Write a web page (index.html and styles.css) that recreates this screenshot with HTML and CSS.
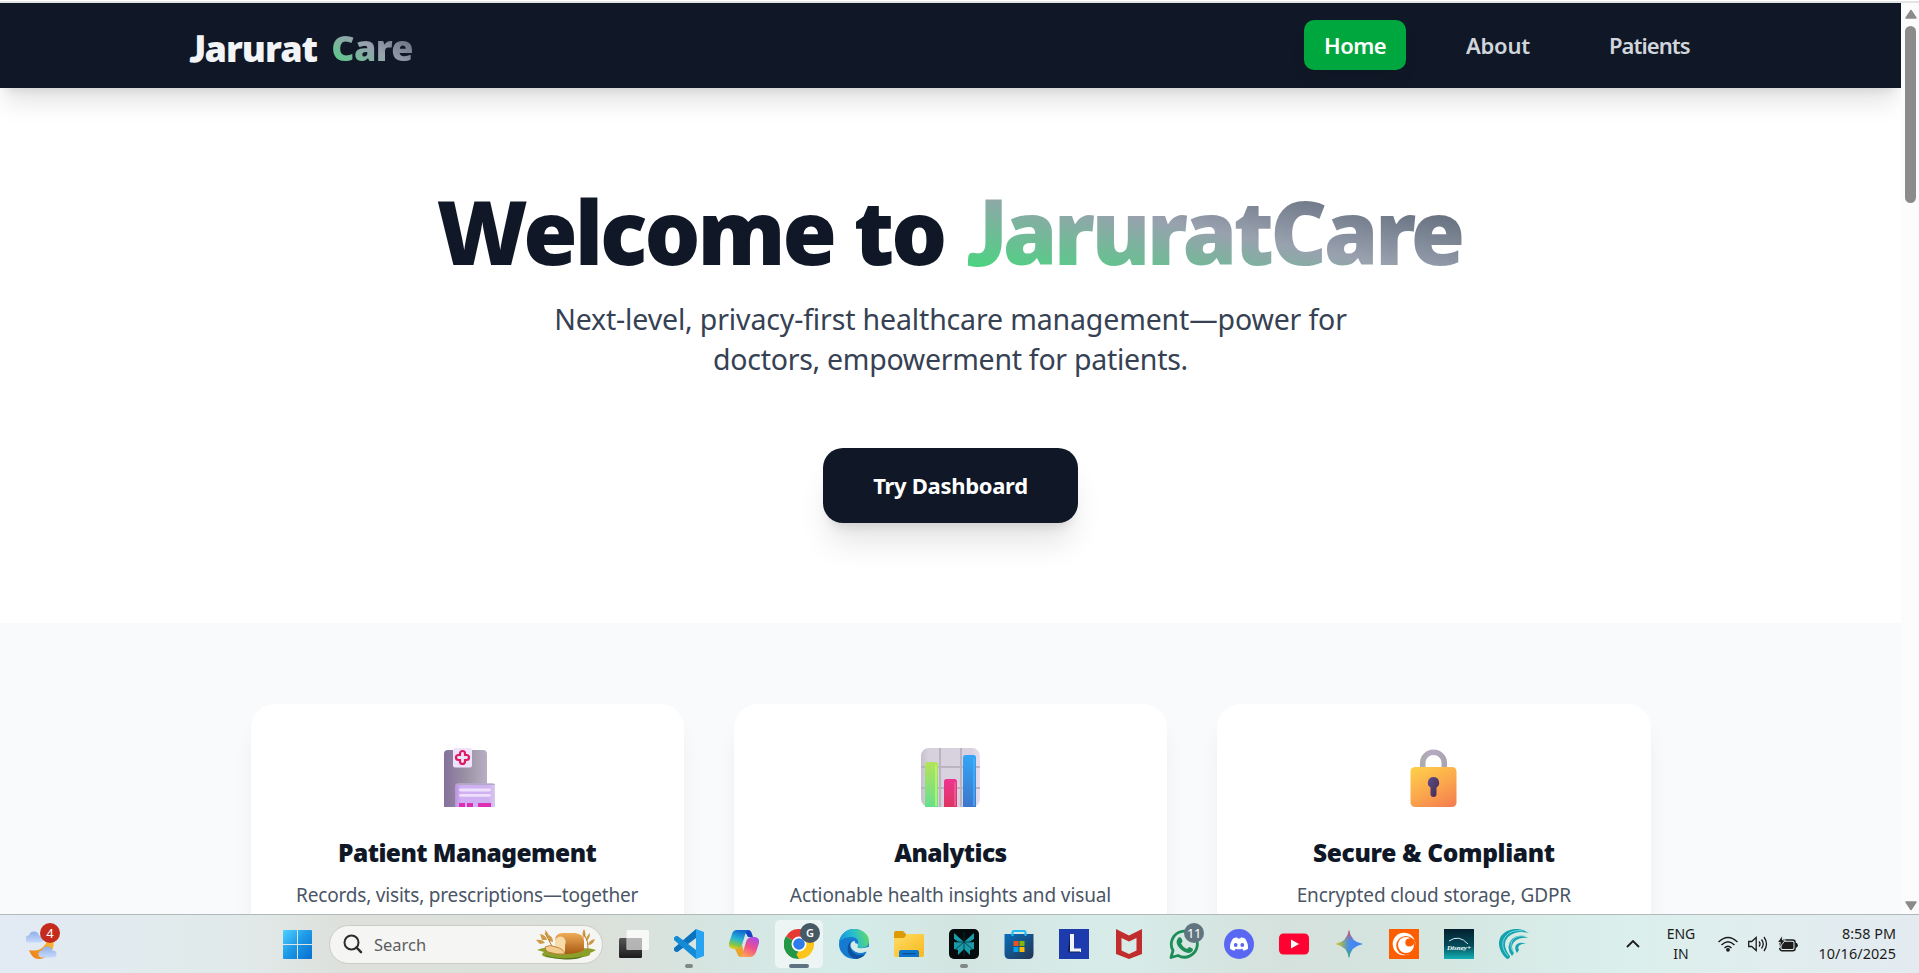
FILE: index.html
```html
<!DOCTYPE html>
<html lang="en">
<head>
<meta charset="utf-8">
<title>Jarurat Care</title>
<link rel="stylesheet" href="styles.css">
</head>
<body>
<div class="screen">
  <div class="window-edge"></div>
  <div class="viewport">
    <div class="page">
      <header class="navbar">
        <div class="logo"><span class="logo-a"><span class="jay">J</span>arurat</span><span class="logo-b grad">Care</span></div>
        <nav class="links">
          <a class="link active">Home</a>
          <a class="link about">About</a>
          <a class="link patients">Patients</a>
        </nav>
      </header>
      <section class="hero">
        <h1 class="title"><span class="title-a">Welcome to</span><span class="title-b grad"><span class="jay">J</span>aruratCare</span></h1>
        <p class="subtitle">Next-level, privacy-first healthcare management—power for<br><span class="sub-two">doctors, empowerment for patients.</span></p>
        <a class="cta">Try Dashboard</a>
      </section>
      <section class="features">
        <article class="card">
          <svg class="emoji" viewBox="-3 0 59 59">
            <defs>
              <linearGradient id="hb" x1="0" y1="0" x2="1" y2="0"><stop offset="0" stop-color="#85709b"/><stop offset=".5" stop-color="#9a91a5"/><stop offset="1" stop-color="#b8b0c2"/></linearGradient>
              <linearGradient id="hf" x1="0" y1="0" x2="1" y2="0"><stop offset="0" stop-color="#b893de"/><stop offset=".15" stop-color="#d0aff4"/><stop offset=".85" stop-color="#ceb2f0"/><stop offset="1" stop-color="#d9c9ec"/></linearGradient>
            </defs>
            <path d="M3 59V6a4 4 0 0 1 4-4h35a4 4 0 0 1 4 4v53z" fill="url(#hb)"/>
            <path d="M14 59V38a2.500 2.500 0 0 1 2.500-2.500h35a2.500 2.500 0 0 1 2.500 2.500v21z" fill="url(#hf)"/>
            <path d="M15 37q0-1.500 2-1.500h35q2 0 2 1.500z" fill="#b4a6c6"/>
            <rect x="12" y="0" width="19" height="19.500" rx="2" fill="#efe3fb"/>
            <path d="M19 7V5.500a2.500 2.500 0 0 1 5 0V7h1.500a2.500 2.500 0 0 1 0 5H24v1.500a2.500 2.500 0 0 1-5 0V12h-1.500a2.500 2.500 0 0 1 0-5z" fill="none" stroke="#df1a5f" stroke-width="2.200"/>
            <path d="M19.500 42h29M19.500 47.300h29" stroke="#eee0fc" stroke-width="2.800" stroke-linecap="round"/>
            <path d="M18 55h6v4h-6zM26 55h6v4h-6zM37 55h13v4H37z" fill="#dc2fb1"/>
          </svg>
          <h2 class="card-title">Patient Management</h2>
          <p class="card-text records">Records, visits, prescriptions—together</p>
        </article>
        <article class="card">
          <svg class="emoji" viewBox="0 0 59 59">
            <defs>
              <linearGradient id="g1" x1="0" y1="0" x2="0" y2="1"><stop offset="0" stop-color="#b3e35b"/><stop offset="1" stop-color="#67df8d"/></linearGradient>
              <linearGradient id="g2" x1="0" y1="0" x2="0" y2="1"><stop offset="0" stop-color="#ee3590"/><stop offset="1" stop-color="#dc3560"/></linearGradient>
              <linearGradient id="g3" x1="0" y1="0" x2="0" y2="1"><stop offset="0" stop-color="#33a6f8"/><stop offset="1" stop-color="#3c76cc"/></linearGradient>
              <linearGradient id="gb" x1="0" y1="0" x2="1" y2="0"><stop offset="0" stop-color="#c6bfcd"/><stop offset=".12" stop-color="#d7d1dd"/><stop offset=".85" stop-color="#d9d1e0"/><stop offset="1" stop-color="#e7dfec"/></linearGradient>
            </defs>
            <rect width="59" height="59" rx="8" fill="url(#gb)"/>
            <path d="M19 0v59M40 0v59M0 19h59M0 40h59" stroke="#b9b4bf" stroke-width="2"/>
            <path d="M4 59V16.500a2.500 2.500 0 0 1 2.500-2.500h8a2.500 2.500 0 0 1 2.500 2.500V59z" fill="url(#g1)"/>
            <path d="M23 59V33.500a2.500 2.500 0 0 1 2.500-2.500h8a2.500 2.500 0 0 1 2.500 2.500V59z" fill="url(#g2)"/>
            <path d="M42 59V9.500A2.500 2.500 0 0 1 44.500 7h8A2.500 2.500 0 0 1 55 9.500V59z" fill="url(#g3)"/>
            <path d="M15 17v41" stroke="#bff66f" stroke-width="2" opacity=".8"/><path d="M34 34v24" stroke="#ee5593" stroke-width="2"/><path d="M53 10v48" stroke="#4fb0f6" stroke-width="2" opacity=".7"/>
          </svg>
          <h2 class="card-title">Analytics</h2>
          <p class="card-text">Actionable health insights and visual</p>
        </article>
        <article class="card">
          <svg class="emoji" viewBox="0 0 59 59">
            <defs>
              <linearGradient id="lb" x1=".2" y1="0" x2=".8" y2="1"><stop offset="0" stop-color="#ffcb4b"/><stop offset=".5" stop-color="#fba94c"/><stop offset="1" stop-color="#f5804f"/></linearGradient>
              <linearGradient id="ls" x1="0" y1="0" x2="1" y2="0"><stop offset="0" stop-color="#adabb1"/><stop offset=".5" stop-color="#b7a9c4"/><stop offset="1" stop-color="#aaa5b0"/></linearGradient>
              <linearGradient id="lk" x1="0" y1="0" x2="1" y2="1"><stop offset="0" stop-color="#5b4e8a"/><stop offset="1" stop-color="#46294b"/></linearGradient>
            </defs>
            <path d="M18.700 22v-7a10.800 10.800 0 0 1 21.600 0v7" fill="none" stroke="url(#ls)" stroke-width="5.600"/>
            <rect x="6.500" y="19" width="46" height="40" rx="4.500" fill="url(#lb)"/>
            <path d="M29.500 29a5.700 5.700 0 0 1 3 10.500V46a3 3 0 0 1-6 0v-6.500a5.700 5.700 0 0 1 3-10.500z" fill="url(#lk)"/>
          </svg>
          <h2 class="card-title secure">Secure &amp; Compliant</h2>
          <p class="card-text">Encrypted cloud storage, GDPR</p>
        </article>
      </section>
    </div>
    <div class="scrollbar">
      <svg width="12" height="10" viewBox="0 0 12 10"><path d="M6 1.500 11 9H1z" fill="#8b8b8b" stroke="#8b8b8b" stroke-width="1.500" stroke-linejoin="round"/></svg>
      <div class="thumb"></div>
      <svg class="down" width="12" height="10" viewBox="0 0 12 10"><path d="M1 1h10L6 8.500z" fill="#8b8b8b" stroke="#8b8b8b" stroke-width="1.500" stroke-linejoin="round"/></svg>
    </div>
  </div>
  <footer class="taskbar">
    <div class="weather">
      <svg width="34" height="34" viewBox="0 0 34 34">
        <defs><linearGradient id="cl" x1="0" y1="0" x2="0" y2="1"><stop offset="0" stop-color="#8fb0ea"/><stop offset="1" stop-color="#c6d9fa"/></linearGradient>
        <linearGradient id="mo" x1="1" y1="0" x2="0" y2="1"><stop offset="0" stop-color="#ffc23a"/><stop offset="1" stop-color="#ea7a17"/></linearGradient></defs>
        <path d="M26 10q4 8-1 15-5 7-12 7-7 0-10-9 10 2 15-4 4-5 4-9z" fill="url(#mo)"/>
        <path d="M3 15.500a3.500 3.500 0 0 1 0-7q1-4 5-4 4 0 5 4 4 0 4 3.500t-3 3.500z" fill="url(#cl)"/>
        <path d="M16 30.500a3.500 3.500 0 0 1 0-7q1-4 5.500-4 4 0 5 4 4 0 4 3.500t-3.500 3.500z" fill="url(#cl)"/>
      </svg>
      <span class="badge red">4</span>
    </div>
    <svg class="start" width="29" height="29" viewBox="0 0 29 29"><defs><linearGradient id="wi" x1="0" y1="0" x2="1" y2="1"><stop offset="0" stop-color="#4fd0ff"/><stop offset=".5" stop-color="#1c97e6"/><stop offset="1" stop-color="#0670ce"/></linearGradient></defs><path d="M0 1a1 1 0 0 1 1-1h13v14H0zM15 0h13a1 1 0 0 1 1 1v13H15zM0 15h14v14H1a1 1 0 0 1-1-1zM15 15h14v13a1 1 0 0 1-1 1H15z" fill="url(#wi)"/></svg>
    <div class="search">
      <svg width="20" height="20" viewBox="0 0 20 20" fill="none" stroke="#2c2c2c" stroke-linecap="round"><circle cx="8.500" cy="8.500" r="7" stroke-width="2"/><path d="m13.500 13.500 4.500 4.700" stroke-width="2.500"/></svg>
      <span class="search-text">Search</span>
      <svg class="bread" width="62" height="32" viewBox="0 0 62 32">
        <defs><linearGradient id="br" x1="0" y1="0" x2="0" y2="1"><stop offset="0" stop-color="#efac58"/><stop offset="1" stop-color="#a85a14"/></linearGradient></defs>
        <path d="M2 22q6-3 15-2l28 0q12 0 16 2-3 2-6 3 2 3-8 4-12 3-26 1-12 0-14-3 0-2 2-3z" fill="#8ba02b"/>
        <path d="M10 27q16 6 40 1-10 5-25 3-12-1-15-4z" fill="#54701a"/>
        <g fill="#cf9845"><path d="M10 2q5 4 4 9-4-4-4-9zM14 7q4 2 4 7l-4-1zM1 12q6-1 9 3l-5 1zM5 6q6 1 7 6l-5 0zM49 1q3 5 0 9-3-4 0-9zM55 5q0 6-4 8 0-5 4-8zM60 11q-2 6-7 6 1-5 7-6z"/></g>
        <path d="m10 5 8 15M49 6q5 7 4 16" stroke="#b97d2f" fill="none"/>
        <path d="M20 12q0-6 7-7l13 0q9 1 9 8v9q-6 4-18 4-8 0-11-2z" fill="url(#br)"/>
        <path d="M20 12q3-5 8-3 4 3 2 8v8q-6 1-10-2z" fill="#f7dcaa"/>
        <path d="M10 19q5-3 11 0 8 2 9 7-8 1-17-2-3-2-3-5z" fill="#f3cd90" stroke="#b56d24" stroke-width=".8"/>
      </svg>
    </div>
    <div class="apps">
      <div class="app"><svg viewBox="0 0 30 30"><defs><linearGradient id="tk" x1="0" y1="0" x2="0" y2="1"><stop offset="0" stop-color="#555"/><stop offset="1" stop-color="#1c1c1c"/></linearGradient></defs><rect x="0" y="9" width="23" height="20" rx="1.500" fill="url(#tk)"/><rect x="7.500" y="1" width="22.500" height="20" rx="1.500" fill="#fff" opacity=".78"/><path d="M7.500 9H23v12H7.500z" fill="#999" opacity=".55"/></svg></div>
      <div class="app dot"><svg viewBox="0 0 30 30"><path d="M22 0 0 19v2.500l2 1.500 1.500 0L24 7.500z" fill="#0b73bd"/><path d="M22 30 0 11V8.500L2 7l1.500 0L24 22.500z" fill="#148bd6"/><path d="m22 0 8 3v24l-8 3z" fill="#27a3f2"/></svg></div>
      <div class="app"><svg viewBox="0 0 30 30"><defs><linearGradient id="c1" x1=".5" y1="0" x2=".2" y2="1"><stop offset="0" stop-color="#1268d3"/><stop offset=".45" stop-color="#28b5d5"/><stop offset=".75" stop-color="#79c650"/><stop offset="1" stop-color="#f3cb13"/></linearGradient><linearGradient id="c2" x1=".8" y1="0" x2=".3" y2="1"><stop offset="0" stop-color="#a64bec"/><stop offset=".5" stop-color="#ee4f8e"/><stop offset="1" stop-color="#ffa354"/></linearGradient></defs><path d="M15 1h4q3 0 4 4l1 3h-5z" fill="#1643c4"/><path d="M8 1h11q-2 1-3 5l-3 10q-1 4-5 4H4q-5-1-4-6l3-9q1-4 5-4z" fill="url(#c1)"/><path d="M6 20q5 0 7-4l2 8q1 4 3 4h-6q-3 0-4-4z" fill="#eaa42b"/><path d="M21 28H10q3-1 4-5l3-10q1-4 5-5h4q5 1 4 6l-3 9q-2 5-6 5z" fill="url(#c2)"/></svg></div>
      <div class="app current"><svg viewBox="0 0 30 30"><path d="M15 15 2 7.500A15 15 0 0 1 28 7.500z" fill="#e53a32"/><path d="M15 15 28 7.500A15 15 0 0 1 15 30z" fill="#fcc51c"/><path d="M15 15v15A15 15 0 0 1 2 7.500z" fill="#249744"/><path d="m8 18 7 12 7-12z" fill="#fcc51c"/><path d="M2 7.500 8.500 18.500l6.500 3-5 8A15 15 0 0 1 2 7.500z" fill="#249744"/><circle cx="15" cy="15" r="7.500" fill="#fff"/><circle cx="15" cy="15" r="5.800" fill="#2f7cec"/></svg><span class="badge slate g">G</span></div>
      <div class="app"><svg viewBox="0 0 30 30"><defs><linearGradient id="e1" x1="0" y1=".5" x2="1" y2=".3"><stop offset="0" stop-color="#1796dc"/><stop offset=".5" stop-color="#28bdd0"/><stop offset="1" stop-color="#63dc62"/></linearGradient></defs><circle cx="15" cy="15" r="15" fill="#167bd0"/><path d="M0 14A15 15 0 0 1 15 0c9 0 15 6 15 12 0 5-4 7-8 7-3 0-5-1-4-2 3-5 0-9-6-9C6 8 1 11 0 14z" fill="url(#e1)"/><path d="M11 16c0 6 5 11 11 10q3 0 5-1.500A15 15 0 0 1 18 30C8 29 6 17 12 12q-1 2-1 4z" fill="#0e519f"/><path d="M16 12c-4 0-6 4-3 8 3 4 9 5 14 2l1 2q3-3 2-6-8 4-12 0 3-3-2-4z" fill="#d4ece9"/><path d="M17 17q2 4 12 1l-1.500 4.500Q19 26 14 20z" fill="#d4ece9"/></svg></div>
      <div class="app"><svg viewBox="0 0 30 30"><defs><linearGradient id="fo" x1="0" y1="0" x2="1" y2="1"><stop offset="0" stop-color="#ffdc65"/><stop offset="1" stop-color="#f9b91c"/></linearGradient></defs><path d="M0 4q0-2 2-2h7l3 3v5H0z" fill="#dc9a06"/><path d="M0 9h10l3-4h16q1 0 1 1v20q0 2-2 2H2q-2 0-2-2z" fill="url(#fo)"/><path d="M5 28v-5q0-2 2-2h16q2 0 2 2v5z" fill="#0d74cc"/><path d="M8.500 24.700h13" stroke="#064a91" stroke-width="1.200"/></svg></div>
      <div class="app dot"><svg viewBox="0 0 30 30"><rect width="30" height="30" rx="5" fill="#050b0c"/><path d="M5 4l10 9L25 4v6l-5 3h5v7l-4 1v5l-6-6-6 6v-5l-4-1v-7h5l-5-3z" fill="#189aa8"/><path d="M15 3v24M6 13l9 0 9 0M7 20l8-7 8 7" stroke="#07363c" stroke-width=".8" fill="none"/></svg></div>
      <div class="app"><svg viewBox="0 0 30 30"><defs><linearGradient id="st" x1="0" y1="0" x2="1" y2="1"><stop offset="0" stop-color="#0870bd"/><stop offset="1" stop-color="#24334f"/></linearGradient></defs><path d="M.5 5h29v20q0 5-5 5h-19q-5 0-5-5z" fill="url(#st)"/><path d="M8.500 7V3.500q0-1.500 1.500-1.500h10q1.500 0 1.500 1.500V7" fill="none" stroke="#22b8f2" stroke-width="2"/><path d="M9.500 12H14.500v5h-5z" fill="#f25022"/><path d="M15.500 12h5v5h-5z" fill="#7fba00"/><path d="M9.500 18h5v5h-5z" fill="#00a4ef"/><path d="M15.500 18h5v5h-5z" fill="#ffb900"/></svg></div>
      <div class="app"><svg viewBox="0 0 30 30"><rect width="30" height="30" fill="#1d3bac"/><path d="m11 5-2 18 2-1z" fill="#0b1c45"/><path d="M11 5h4v14.500h7V23H11z" fill="#f1f4fb"/><path d="M9 23h12" stroke="#12265e"/></svg></div>
      <div class="app"><svg viewBox="0 0 30 30"><path d="m2 0 13 6.500L28 0v25L15 30 2 25zM7.500 9v12.500L15 25l7.500-3.500V9L15 12.500z" fill="#c12d2c" fill-rule="evenodd"/></svg></div>
      <div class="app"><svg viewBox="0 0 30 30"><path d="M2 28.500 4 21.500A13 13 0 1 1 9 26.500z" fill="none" stroke="#1c8d57" stroke-width="2.800" stroke-linejoin="round"/><path d="M9.500 8.500q2-1 3 1l1 2.500q0 1-1.500 2.500 2 4 6 5.500 1.500-2 2.500-2l3 1.500q1 .5 0 2.500-1.500 2-4 2-5-.5-9-5-4-4.500-2.500-8z" fill="#1c8d57"/></svg><span class="badge slate light">11</span></div>
      <div class="app"><svg viewBox="0 0 30 30"><circle cx="15" cy="15" r="15" fill="#5a67f2"/><path d="M9 9.500q2-1 4-1.300l.7 1.300h2.600l.7-1.300q2 .3 4 1.300 3.500 5 3 10.300-2 1.500-4.500 2l-1.200-2q-3.300 1-6.600 0l-1.200 2q-2.500-.5-4.500-2Q5.500 14.500 9 9.500z" fill="#fff"/><ellipse cx="11.700" cy="16" rx="1.900" ry="2.100" fill="#5a67f2"/><ellipse cx="18.300" cy="16" rx="1.900" ry="2.100" fill="#5a67f2"/></svg></div>
      <div class="app"><svg viewBox="0 0 30 30"><rect y="4.500" width="30" height="21" rx="4.500" fill="#ff0232"/><path d="m12 10.500 8 4.500-8 4.500z" fill="#fff"/></svg></div>
      <div class="app"><svg viewBox="0 0 30 30"><defs><linearGradient id="ge" x1="0" y1=".5" x2="1" y2=".5"><stop offset="0" stop-color="#f4c51c"/><stop offset=".25" stop-color="#8fb26c"/><stop offset=".5" stop-color="#4a8cec"/><stop offset="1" stop-color="#3a82f6"/></linearGradient><linearGradient id="gr" x1="0" y1="0" x2="0" y2="1"><stop offset="0" stop-color="#f0484b"/><stop offset=".4" stop-color="#e0565c" stop-opacity="0"/><stop offset=".65" stop-color="#2fae6a" stop-opacity="0"/><stop offset="1" stop-color="#30b354"/></linearGradient></defs><path d="M15 1q2 12 14 14-12 2-14 14Q13 17 1 15 13 13 15 1z" fill="url(#ge)"/><path d="M15 1q2 12 14 14-12 2-14 14Q13 17 1 15 13 13 15 1z" fill="url(#gr)"/></svg></div>
      <div class="app"><svg viewBox="0 0 30 30"><rect width="30" height="30" fill="#ff5e00"/><circle cx="15" cy="15" r="11.300" fill="#fff"/><circle cx="16.800" cy="16.500" r="9.600" fill="#ff5e00"/><circle cx="17" cy="16" r="8" fill="#fff"/><circle cx="20.300" cy="13.500" r="4" fill="#ff5e00"/><path d="M20 8l6 3-2 6z" fill="#ff5e00"/></svg></div>
      <div class="app"><svg viewBox="0 0 30 30"><defs><linearGradient id="di" x1="0" y1="0" x2="0" y2="1"><stop offset="0" stop-color="#03202f"/><stop offset=".55" stop-color="#044b59"/><stop offset="1" stop-color="#12b0b4"/></linearGradient></defs><rect width="30" height="30" fill="url(#di)"/><path d="M5 12q10-7 19 3" fill="none" stroke="#d5e9ee"/><text class="disney" x="3" y="20.500" textLength="24" lengthAdjust="spacingAndGlyphs">Disney+</text></svg></div>
      <div class="app"><svg viewBox="0 0 30 30"><g fill="#14a3ae"><path d="M30 4Q19-3 8 2-3 8 1 20q2 6 7 10 3 0 3-3Q2 16 9 8q8-7 21-4z"/><path d="M29 9q-9-5-16 1-7 8 0 17l2-3q-4-7 0-11 5-5 14-4z"/><path d="M27 15q-6-3-10 1-2 4 1 8l2-3q-2-3 1-5 3-2 6-1z"/></g><path d="M24 2Q12 0 6 8q-6 9 3 19M25 7q-8-1-12 5-3 6 2 12" fill="none" stroke="#7ad9dc" stroke-width=".9"/></svg></div>
    </div>
    <div class="tray">
      <svg class="chev" width="14" height="8" viewBox="0 0 14 8" fill="none" stroke="#1c1c1c" stroke-width="1.800"><path d="m1 7 6-6 6 6"/></svg>
      <div class="lang"><span>ENG</span><span>IN</span></div>
      <svg class="wifi" width="20" height="16" viewBox="0 0 20 16" fill="none" stroke="#1c1c1c" stroke-width="1.400"><path d="M.5 6q9.500-9 19 0M3.500 9q6.500-6.500 13 0M6.500 12q3.500-3.500 7 0"/><circle cx="10" cy="13.800" r="1.200" fill="#1c1c1c"/></svg>
      <svg class="speaker" width="20" height="16" viewBox="0 0 20 16" fill="none" stroke="#1c1c1c" stroke-width="1.300"><path d="M.7 5.500h3l4.500-4v13l-4.500-4h-3zM11 5.500q2 2.500 0 5M13.500 3.500q3.500 4.500 0 9M16 1q5 7 0 14"/></svg>
      <svg class="battery" width="20" height="16" viewBox="0 0 20 16"><rect x="1.700" y="4" width="15.500" height="10.800" rx="2.500" fill="none" stroke="#1c1c1c" stroke-width="1.400"/><rect x="3.500" y="5.800" width="12" height="7.200" rx="1" fill="#1c1c1c"/><path d="M17.300 7h1.700l1 2.200-1 2.200h-1.700z" fill="#1c1c1c"/><path d="M4-.5-.5 6.500h2.800L1 12 7.500 4H4.500z" fill="#1c1c1c" stroke="#e3ecef" stroke-width=".9"/></svg>
      <div class="clock"><span>8:58 PM</span><span class="date">10/16/2025</span></div>
    </div>
  </footer>
</div>
</body>
</html>
```
FILE: styles.css
```css
* { box-sizing: border-box; }
body { margin: 0; font-family: "Noto Sans", "Open Sans", sans-serif; background: #fff; }
h1, h2, p { margin: 0; }
svg { display: block; flex: none; }
.screen { display: flex; flex-direction: column; width: 1919px; height: 973px; overflow: hidden; }
.window-edge { height: 3px; flex: none; background: linear-gradient(#fff 0 1px, #e3e5e4 1px); }
.viewport { display: flex; height: 911px; flex: none; overflow: hidden; }
.page { width: 1901px; height: 911px; overflow: hidden; }

.navbar { position: relative; z-index: 1; display: flex; justify-content: space-between; height: 85px; padding: 17px 190px 0; background: #101827; box-shadow: 0 20px 25px -5px rgba(0,0,0,.1), 0 8px 10px -6px rgba(0,0,0,.1); }
.logo { display: flex; gap: 14px; height: 54px; padding-top: 1px; line-height: 54px; font-size: 36px; font-weight: 900; color: #f3f4f6; white-space: nowrap; }
.logo-a { letter-spacing: -1px; }
.logo-b { letter-spacing: -.6px; }
.jay { font-family: Lato, "Noto Sans", sans-serif; -webkit-text-stroke: .035em; }
.grad { background: linear-gradient(to top right, #3fdb79, #99a1af 50%, #4a5565); -webkit-background-clip: text; background-clip: text; color: transparent; }
.links { display: flex; gap: 40px; }
.link { height: 50px; padding: 0 20px; border-radius: 10px; line-height: 50px; font-size: 22px; font-weight: 600; color: #d1d5dc; white-space: nowrap; }
.active { width: 102px; background: #00a63e; color: #fff; letter-spacing: -.5px; box-shadow: 0 10px 15px -3px rgba(0,0,0,.1); }
.about { width: 103px; letter-spacing: -.25px; }
.patients { width: 122px; letter-spacing: -.95px; }

.hero { display: flex; flex-direction: column; align-items: center; height: 535px; padding-top: 95px; background: #fff; }
.title { display: flex; gap: 24px; height: 96px; line-height: 96px; font-size: 88px; font-weight: 900; color: #101827; white-space: nowrap; }
.title-a { letter-spacing: -3px; }
.title-b { letter-spacing: -3.7px; padding-right: 3px; }
.subtitle { margin-top: 20px; font-size: 28.5px; line-height: 40px; letter-spacing: -.15px; text-align: center; color: #364153; white-space: nowrap; }
.sub-two { letter-spacing: -.28px; }
.cta { display: block; width: 255px; height: 75px; margin-top: 69px; border-radius: 20px; background: #101827; color: #fff; font-size: 22px; font-weight: 700; line-height: 75px; letter-spacing: -.3px; text-align: center; box-shadow: 0 25px 30px -5px rgba(0,0,0,.1), 0 10px 12px -7px rgba(0,0,0,.12); }

.features { display: grid; grid-template-columns: repeat(3, 1fr); gap: 50px; height: 400px; padding: 81px 250.5px 0; background: #f9fafc; }
.card { display: flex; flex-direction: column; align-items: center; padding-top: 44px; border-radius: 24px; background: #fff; box-shadow: 0 20px 25px -5px rgba(0,0,0,.07), 0 8px 10px -6px rgba(0,0,0,.07); }
.emoji { width: 59px; height: 59px; }
.card-title { margin-top: 30px; font-size: 24.5px; font-weight: 900; line-height: 32px; letter-spacing: -.55px; color: #101827; white-space: nowrap; }
.secure { letter-spacing: -.35px; }
.card-text { margin-top: 12px; font-size: 19px; line-height: 28px; letter-spacing: -.12px; color: #4a5565; white-space: nowrap; }
.records { letter-spacing: -.19px; }

.scrollbar { display: flex; flex-direction: column; align-items: center; width: 18px; padding: 6px 0 3px 1px; background: #fcfcfc; }
.thumb { width: 11px; height: 177px; margin-top: 7px; border-radius: 6px; background: #8b8b8b; }
.down { margin-top: auto; }

.taskbar { display: flex; align-items: center; height: 59px; flex: none; border-top: 1px solid #b0b8b8; background: linear-gradient(90deg, #e2eaf4 0, #e1ebec 9%, #e1e9e9 13%, #dde0db 18%, #dce0da 31%, #d6e5e1 37%, #d4ece9 44%, #d4e5e1 50%, #d7ece9 58%, #d5e1dc 67%, #d5e6e1 75%, #daefec 84%, #e1edee 92%, #e3ebf1 100%); }
.weather { position: relative; width: 34px; margin-left: 26px; }
.badge { position: absolute; width: 20px; height: 20px; border-radius: 50%; font-size: 13px; line-height: 20px; text-align: center; color: #fff; }
.red { top: -4px; left: 14px; background: #c42b1c; }
.slate { top: -6px; left: 16px; background: #475a64; }
.g { font-size: 11px; font-weight: 600; }
.light { left: 15px; background: #607580; letter-spacing: -.5px; }
.start { margin-left: 223px; }
.search { display: flex; align-items: center; width: 274px; height: 39px; margin-left: 17px; padding: 0 5px 0 13px; border: 1px solid #c9cdca; border-radius: 20px; background: #f5f6f4; }
.search-text { margin-left: 11px; font-size: 16.500px; color: #5d5d5d; }
.bread { margin-left: auto; }
.apps { display: flex; gap: 25px; margin-left: 16px; }
.app { position: relative; width: 30px; height: 30px; }
.app svg { position: relative; width: 30px; height: 30px; }
.dot::after { content: ""; position: absolute; left: 11px; top: 35px; width: 8px; height: 4px; border-radius: 2px; background: #7e8887; }
.current::before { content: ""; position: absolute; left: -9px; top: -9px; width: 48px; height: 48px; border-radius: 5px; background: #edf5f4; }
.current::after { content: ""; position: absolute; left: 5px; top: 35px; width: 20px; height: 4px; border-radius: 2px; background: #5d7383; }
.disney { font: italic 700 7px "Liberation Serif", serif; fill: #fff; }
.tray { display: flex; align-items: center; margin-left: 97px; font-size: 14.400px; line-height: 20px; color: #1c1c1c; }
.lang { display: flex; flex-direction: column; align-items: center; width: 30px; margin-left: 26px; font-size: 14px; }
.wifi { margin-left: 22px; }
.speaker { margin-left: 10px; }
.battery { margin-left: 10px; overflow: visible; }
.clock { display: flex; flex-direction: column; align-items: flex-end; width: 98px; }
.date { letter-spacing: .1px; }
```
